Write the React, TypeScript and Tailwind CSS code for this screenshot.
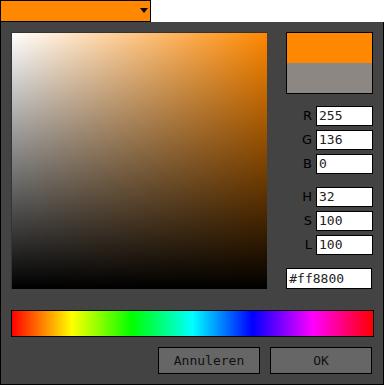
import React from 'react'

function Field({ label, value }: { label: string; value: string }) {
  return (
    <div className="flex h-[20px] items-center justify-end gap-[4px]">
      <span className="text-[13px] text-black">{label}</span>
      <div className="flex h-[20px] w-[57px] items-center border border-black bg-white px-[2px] font-['DejaVu_Sans_Mono',monospace] text-[13px] text-[#222]">
        {value}
      </div>
    </div>
  )
}

export default function App() {
  return (
    <div className="h-[386px] w-[385px] bg-white font-['DejaVu_Sans',sans-serif]">
      {/* colour dropdown */}
      <div className="relative h-[22px] w-[151px] border border-black bg-[#ff8800]">
        <svg className="absolute right-[2px] top-[7px]" width="8" height="5" viewBox="0 0 8 5">
          <path d="M0 0h8L4 5z" fill="#000" />
        </svg>
      </div>

      {/* picker panel */}
      <div className="flex h-[363px] w-[384px] flex-col border border-t-0 border-black bg-[#434343] px-[10px] pt-[10px]">
        <div className="flex">
          <div
            className="h-[257px] w-[257px] border-l border-t border-[#333]"
            style={{
              background:
                'linear-gradient(to bottom, rgba(0,0,0,0), #000), linear-gradient(to right, #fff, #ff8800)',
            }}
          />
          <div className="ml-[19px] flex w-[87px] flex-col">
            <div className="flex h-[62px] flex-col border border-black">
              <div className="h-[30px] bg-[#ff8800]" />
              <div className="flex-1 bg-[#8c8782]" />
            </div>
            <div className="mt-[12px] flex flex-col gap-[4px]">
              <Field label="R" value="255" />
              <Field label="G" value="136" />
              <Field label="B" value="0" />
            </div>
            <div className="mt-[13px] flex flex-col gap-[4px]">
              <Field label="H" value="32" />
              <Field label="S" value="100" />
              <Field label="L" value="100" />
            </div>
            <div className="mt-[13px] flex h-[21px] w-[86px] items-center border border-black bg-white px-[2px] font-['DejaVu_Sans_Mono',monospace] text-[13px] text-[#222]">
              #ff8800
            </div>
          </div>
        </div>

        {/* hue strip */}
        <div
          className="mt-[21px] h-[27px] w-[363px] border border-black"
          style={{
            background:
              'linear-gradient(to right, #ff0000, #ffff00 16.6%, #00ff00 33.3%, #00ffff 50%, #0000ff 66.6%, #ff00ff 83.3%, #ff0000)',
          }}
        />

        <div className="mt-[10px] flex justify-end gap-[10px] pr-[1px]">
          <button className="h-[27px] w-[102px] border border-black bg-[#666] font-['DejaVu_Sans_Mono',monospace] text-[13px] text-[#111]">
            Annuleren
          </button>
          <button className="h-[27px] w-[102px] border border-black bg-[#666] font-['DejaVu_Sans_Mono',monospace] text-[13px] text-[#111]">
            OK
          </button>
        </div>
      </div>
    </div>
  )
}
